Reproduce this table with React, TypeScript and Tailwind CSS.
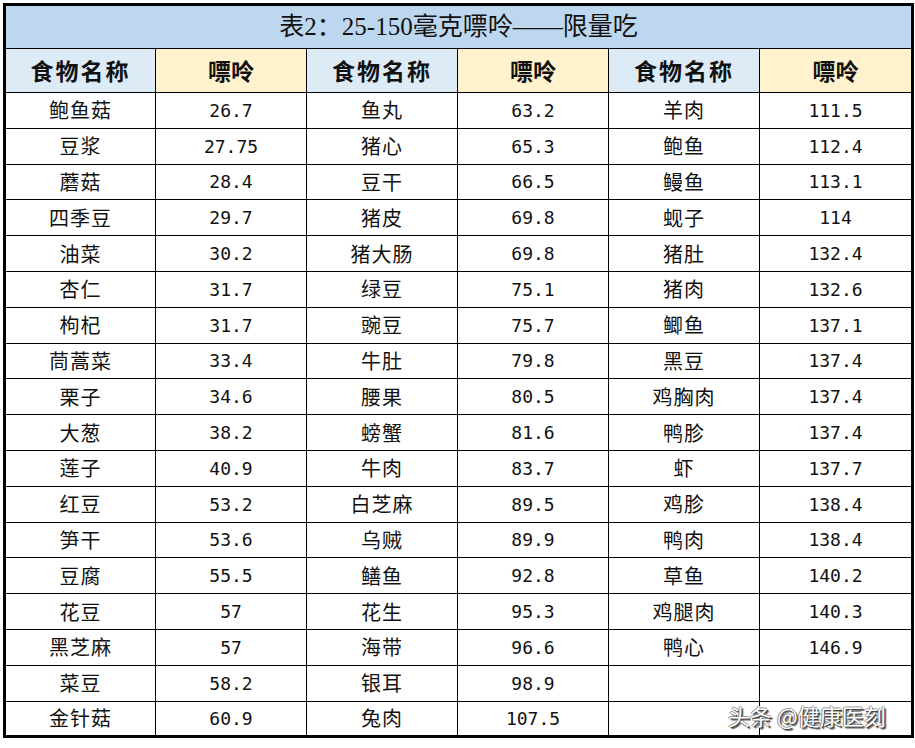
const rows: [string, string, string, string, string, string][] = [
  ["鲍鱼菇", "26.7", "鱼丸", "63.2", "羊肉", "111.5"],
  ["豆浆", "27.75", "猪心", "65.3", "鲍鱼", "112.4"],
  ["蘑菇", "28.4", "豆干", "66.5", "鳗鱼", "113.1"],
  ["四季豆", "29.7", "猪皮", "69.8", "蚬子", "114"],
  ["油菜", "30.2", "猪大肠", "69.8", "猪肚", "132.4"],
  ["杏仁", "31.7", "绿豆", "75.1", "猪肉", "132.6"],
  ["枸杞", "31.7", "豌豆", "75.7", "鲫鱼", "137.1"],
  ["茼蒿菜", "33.4", "牛肚", "79.8", "黑豆", "137.4"],
  ["栗子", "34.6", "腰果", "80.5", "鸡胸肉", "137.4"],
  ["大葱", "38.2", "螃蟹", "81.6", "鸭胗", "137.4"],
  ["莲子", "40.9", "牛肉", "83.7", "虾", "137.7"],
  ["红豆", "53.2", "白芝麻", "89.5", "鸡胗", "138.4"],
  ["笋干", "53.6", "乌贼", "89.9", "鸭肉", "138.4"],
  ["豆腐", "55.5", "鳝鱼", "92.8", "草鱼", "140.2"],
  ["花豆", "57", "花生", "95.3", "鸡腿肉", "140.3"],
  ["黑芝麻", "57", "海带", "96.6", "鸭心", "146.9"],
  ["菜豆", "58.2", "银耳", "98.9", "", ""],
  ["金针菇", "60.9", "兔肉", "107.5", "", ""],
];

const cjk = { fontFamily: '"Noto Sans CJK SC", sans-serif' };
const num = { fontFamily: '"DejaVu Sans Mono", "Liberation Mono", monospace' };

function HeadCell({ kind }: { kind: "name" | "purine" }) {
  return (
    <th
      className={
        "border border-black text-[23px] font-bold text-[#111] " +
        (kind === "name" ? "bg-[#ddebf7] tracking-[2px]" : "bg-[#fff2cc]")
      }
      style={cjk}
    >
      {kind === "name" ? "食物名称" : "嘌呤"}
    </th>
  );
}

export default function App() {
  return (
    <div className="relative w-[915px] h-[748px] bg-white p-[3px] overflow-hidden">
      <table className="w-[908px] border-collapse border-[3px] border-black table-fixed">
        <colgroup>
          <col className="w-[151px]" />
          <col className="w-[151px]" />
          <col className="w-[151px]" />
          <col className="w-[151px]" />
          <col className="w-[151px]" />
          <col className="w-[153px]" />
        </colgroup>
        <thead>
          <tr className="h-[44px]">
            <th
              colSpan={6}
              className="bg-[#bdd7ee] border border-black text-[25px] font-normal text-[#111]"
              style={{ fontFamily: '"Liberation Serif", "Noto Sans CJK SC", serif' }}
            >
              表2：25-150毫克嘌呤——限量吃
            </th>
          </tr>
          <tr className="h-[44px]">
            <HeadCell kind="name" />
            <HeadCell kind="purine" />
            <HeadCell kind="name" />
            <HeadCell kind="purine" />
            <HeadCell kind="name" />
            <HeadCell kind="purine" />
          </tr>
        </thead>
        <tbody>
          {rows.map((r, i) => (
            <tr key={i} className="h-[35.8px]">
              {r.map((c, j) => (
                <td
                  key={j}
                  className={
                    "border border-black text-center text-[#111] p-0 " +
                    (j % 2 === 0 ? "text-[20px] tracking-[1px]" : "text-[18px]")
                  }
                  style={j % 2 === 0 ? cjk : num}
                >
                  {c}
                </td>
              ))}
            </tr>
          ))}
        </tbody>
      </table>
      <div
        className="absolute left-[728px] top-[699px] text-[22px] text-white whitespace-nowrap"
        style={{
          ...cjk,
          textShadow: "1px 1px 0 #444, -1px 0 0 #888, 0 -1px 0 #999, 2px 2px 1px #666",
        }}
      >
        头条 @健康医刻
      </div>
    </div>
  );
}
